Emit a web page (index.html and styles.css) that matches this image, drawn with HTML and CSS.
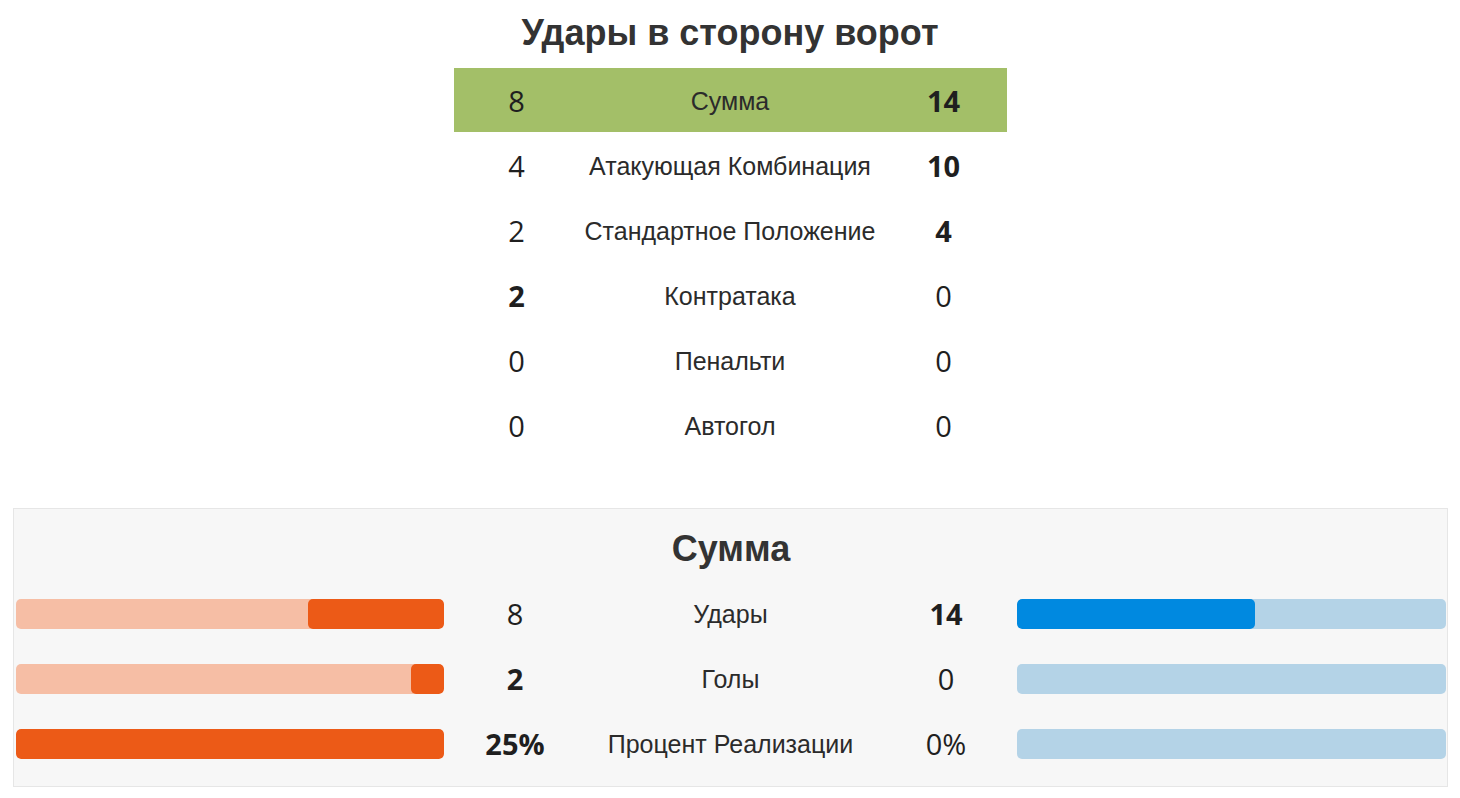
FILE: index.html
```html
<!DOCTYPE html>
<html lang="ru">
<head>
<meta charset="utf-8">
<link rel="stylesheet" href="styles.css">
</head>
<body>
<h1 class="title">Удары в сторону ворот</h1>
<div class="shots">
  <div class="shot-row total"><span class="num">8</span><span class="label">Сумма</span><span class="num strong">14</span></div>
  <div class="shot-row"><span class="num">4</span><span class="label">Атакующая Комбинация</span><span class="num strong">10</span></div>
  <div class="shot-row"><span class="num">2</span><span class="label">Стандартное Положение</span><span class="num strong">4</span></div>
  <div class="shot-row"><span class="num strong">2</span><span class="label">Контратака</span><span class="num">0</span></div>
  <div class="shot-row"><span class="num">0</span><span class="label">Пенальти</span><span class="num">0</span></div>
  <div class="shot-row"><span class="num">0</span><span class="label">Автогол</span><span class="num">0</span></div>
</div>
<section class="panel">
  <h2 class="panel-title">Сумма</h2>
  <div class="cmp-row">
    <div class="bar home"><div class="fill" style="width:31.8%"></div></div>
    <span class="num">8</span><span class="label">Удары</span><span class="num strong">14</span>
    <div class="bar away"><div class="fill" style="width:55.5%"></div></div>
  </div>
  <div class="cmp-row">
    <div class="bar home"><div class="fill" style="width:7.7%"></div></div>
    <span class="num strong">2</span><span class="label">Голы</span><span class="num">0</span>
    <div class="bar away"><div class="fill" style="width:0%"></div></div>
  </div>
  <div class="cmp-row">
    <div class="bar home"><div class="fill" style="width:100%"></div></div>
    <span class="num strong">25%</span><span class="label">Процент Реализации</span><span class="num">0%</span>
    <div class="bar away"><div class="fill" style="width:0%"></div></div>
  </div>
</section>
</body>
</html>
```

FILE: styles.css
```css
* { box-sizing: border-box; }
html, body { margin: 0; padding: 0; background: #fff; }
body { font-family: "Liberation Sans", Arial, sans-serif; color: #2b2b2b; }

.title {
  margin: 13px 0 0;
  height: 55px;
  line-height: 40px;
  text-align: center;
  font-size: 36px;
  font-weight: 700;
  color: #333;
}

.shots {
  width: 553px;
  margin: 0 auto;
}
.shot-row {
  display: grid;
  grid-template-columns: 126px 1fr 126px;
  align-items: center;
  height: 65px;
}
.shot-row.total { background: #a3bf68; height: 64px; margin-bottom: 1px; }

.num {
  text-align: center;
  font-family: "Open Sans", "Noto Sans", sans-serif;
  font-size: 29px;
  font-weight: 500;
  color: #1f1f1f;
}
.num.strong { font-weight: 700; }
.label {
  text-align: center;
  font-size: 25px;
  padding-top: 2px;
  color: #2b2b2b;
}

.panel {
  margin: 50px 12px 0 13px;
  padding: 0 1px 10px 2px;
  background: #f7f7f7;
  border: 1px solid #e6e6e6;
  height: 279px;
}
.panel-title {
  margin: 0;
  height: 72px;
  padding-top: 20px;
  line-height: 40px;
  text-align: center;
  font-size: 36px;
  font-weight: 700;
  color: #333;
}
.cmp-row {
  display: grid;
  grid-template-columns: 428px 142px 1fr 142px 429px;
  align-items: center;
  height: 65px;
}
.bar {
  height: 30px;
  border-radius: 5px;
  display: flex;
  overflow: hidden;
}
.bar.home { background: #f6bea5; justify-content: flex-end; }
.bar.away { background: #b4d3e7; justify-content: flex-start; }
.bar .fill { height: 100%; border-radius: 5px; }
.bar.home .fill { background: #ec5a17; }
.bar.away .fill { background: #0089e0; }
```
